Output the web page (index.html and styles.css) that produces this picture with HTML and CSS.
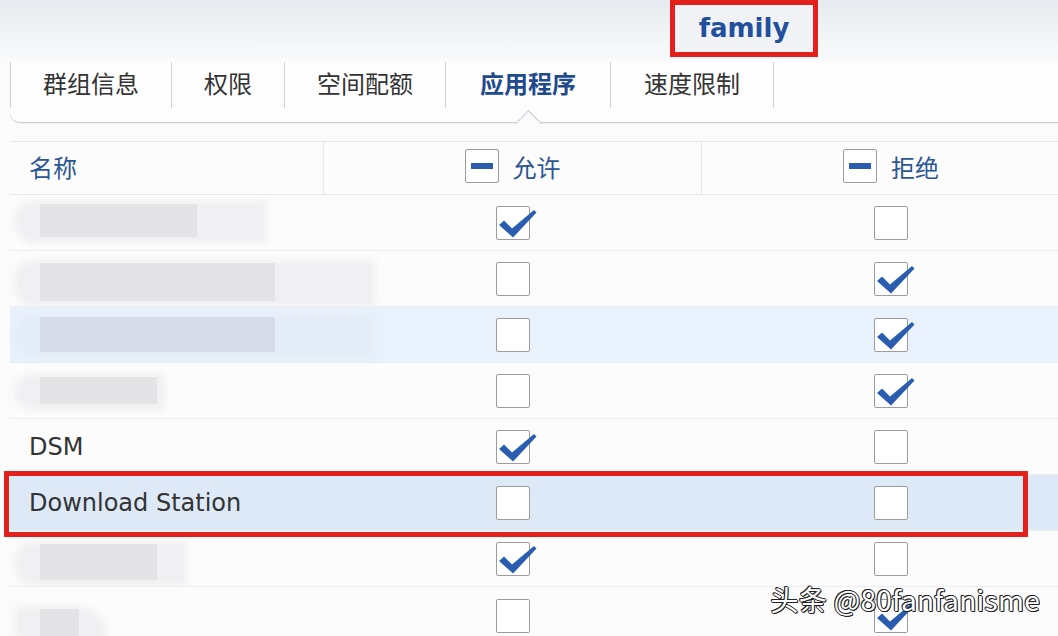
FILE: index.html
```html
<!DOCTYPE html>
<html lang="zh-CN">
<head>
  <meta charset="UTF-8" />
  <title>family - 应用程序权限</title>
  <link rel="stylesheet" href="styles.css">
</head>
<body>
  <div class="page">
    <div class="title-bar">
      <div class="title-box">family</div>
    </div>

    <div class="tabs">
      <div class="tab">群组信息</div>
      <div class="tab">权限</div>
      <div class="tab">空间配额</div>
      <div class="tab active">应用程序</div>
      <div class="tab">速度限制</div>
    </div>

    <div class="grid">
      <div class="row head">
        <div class="cell name">名称</div>
        <div class="cell col"><span class="box mixed"><i></i></span>允许</div>
        <div class="cell col"><span class="box mixed"><i></i></span>拒绝</div>
      </div>

      <div class="row">
        <div class="cell name"><span class="redact r1"></span></div>
        <div class="cell col"><span class="box checked"></span></div>
        <div class="cell col"><span class="box"></span></div>
      </div>
      <div class="row">
        <div class="cell name"><span class="redact r2"></span></div>
        <div class="cell col"><span class="box"></span></div>
        <div class="cell col"><span class="box checked"></span></div>
      </div>
      <div class="row hover">
        <div class="cell name"><span class="redact r3"></span></div>
        <div class="cell col"><span class="box"></span></div>
        <div class="cell col"><span class="box checked"></span></div>
      </div>
      <div class="row">
        <div class="cell name"><span class="redact r4"></span></div>
        <div class="cell col"><span class="box"></span></div>
        <div class="cell col"><span class="box checked"></span></div>
      </div>
      <div class="row">
        <div class="cell name">DSM</div>
        <div class="cell col"><span class="box checked"></span></div>
        <div class="cell col"><span class="box"></span></div>
      </div>
      <div class="row selected marked">
        <div class="cell name">Download Station</div>
        <div class="cell col"><span class="box"></span></div>
        <div class="cell col"><span class="box"></span></div>
      </div>
      <div class="row">
        <div class="cell name"><span class="redact r7"></span></div>
        <div class="cell col"><span class="box checked"></span></div>
        <div class="cell col"><span class="box"></span></div>
      </div>
      <div class="row">
        <div class="cell name"><span class="redact r8"></span></div>
        <div class="cell col"><span class="box"></span></div>
        <div class="cell col"><span class="box checked"></span></div>
      </div>
    </div>

    <div class="watermark">头条 @80fanfanisme</div>
  </div>

  <script>
    // casilla marcada: dibujar el check azul
    const tick = '<svg class="tick" viewBox="0 0 34 34" width="34" height="34">' +
      '<path d="M3 19 L8 14.5 L16 22.5 L38 4 L40.5 6.5 L17 31.5 Z" fill="#2a5cb0"/></svg>';
    document.querySelectorAll(".box.checked").forEach((el) => {
      el.innerHTML = tick;
    });
  </script>
</body>
</html>
```

FILE: styles.css
```css
:root {
  --blue: #2a5cb0;
  --blue-text: #2b5694;
  --line: #e5e7eb;
  --red: #e3201b;
  --text: #333333;
}
body {
  margin: 0;
  background: #fbfbfc;
  font-family: "DejaVu Sans", "Noto Sans CJK SC", sans-serif;
  color: var(--text);
  overflow: hidden;
}
.page {
  position: relative;
  width: 1058px;
  height: 636px;
  overflow: hidden;
  background: linear-gradient(#e7eaef 0, #f9fafb 60px, #fbfbfc 62px);
}
.title-bar {
  height: 62px;
  padding-left: 670px;
}
.title-box {
  width: 148px;
  height: 57px;
  box-sizing: border-box;
  border: 5px solid var(--red);
  background: #f0f2f5;
  text-align: center;
  line-height: 47px;
  font-size: 26px;
  font-weight: bold;
  color: #22509e;
}
.tabs {
  position: relative;
  display: flex;
  margin-left: 10px;
  padding-bottom: 14px;
  border-bottom: 1px solid #c8ccd2;
  border-bottom-left-radius: 10px;
  background: #fdfdfe;
  box-shadow: 0 1px 1px rgba(0, 0, 0, 0.04);
}
.tab {
  position: relative;
  height: 46px;
  line-height: 46px;
  padding: 0 32px;
  font-size: 24px;
  border-left: 1px solid #cfd2d6;
}
.tab:last-child {
  padding: 0 33px;
  border-right: 1px solid #cfd2d6;
}
.tab.active {
  padding: 0 34px;
  color: #1f4a8c;
  font-weight: bold;
}
.tab.active::after {
  content: "";
  position: absolute;
  left: 50%;
  top: 52px;
  width: 18px;
  height: 18px;
  margin-left: -9px;
  background: #fbfbfc;
  border-top: 1px solid #c8ccd2;
  border-left: 1px solid #c8ccd2;
  transform: rotate(45deg);
}
.grid {
  margin: 18px 0 0 10px;
  width: 1070px;
  border-top: 1px solid var(--line);
}
.row {
  position: relative;
  display: grid;
  grid-template-columns: 314px 378px 378px;
  height: 55px;
  border-bottom: 1px solid #eceef1;
  background: #fcfcfd;
}
.row.head {
  height: 52px;
  border-bottom-color: var(--line);
}
.row.head .cell {
  padding-bottom: 4px;
  box-sizing: border-box;
  color: var(--blue-text);
}
.row.head .cell:not(:last-child) {
  border-right: 1px solid var(--line);
}
.row.hover {
  background: #e9f1fc;
}
.row.selected {
  background: #dde9f7;
}
.row.marked {
  z-index: 2;
}
.row.marked::after {
  content: "";
  position: absolute;
  left: -6px;
  top: -4px;
  width: 1024px;
  height: 66px;
  box-sizing: border-box;
  border: 5px solid var(--red);
}
.cell {
  display: flex;
  align-items: center;
  font-size: 24px;
}
.cell.name {
  position: relative;
  z-index: 0;
  padding-left: 19px;
}
.cell.col {
  justify-content: center;
  gap: 14px;
}
.box {
  position: relative;
  width: 34px;
  height: 34px;
  box-sizing: border-box;
  border: 1px solid #9c9c9c;
  border-radius: 2px;
  background: #ffffff;
}
.box.mixed i {
  position: absolute;
  left: 5px;
  top: 13px;
  width: 22px;
  height: 6px;
  background: var(--blue);
}
.tick {
  position: absolute;
  left: -1px;
  top: -1px;
  overflow: visible;
}

/* nombres ocultos (borrosos) */
.redact {
  position: relative;
  display: block;
  margin-left: 11px;
  background: #e4e4e7;
}
.redact::before {
  content: "";
  position: absolute;
  left: -26px;
  top: -3px;
  right: -70px;
  bottom: -6px;
  border-radius: 20px 0 0 20px;
  background: #f0f0f2;
  filter: blur(3px);
  z-index: -1;
}
.r1 { width: 157px; height: 33px; margin-top: -4px; }
.r2 { width: 235px; height: 38px; margin-top: 6px; }
.r2::before { right: -100px; }
.r3 { width: 235px; height: 35px; background: #d6dde8; }
.r3::before { background: #e4ecf7; right: -100px; }
.r4 { width: 117px; height: 27px; }
.r4::before { right: -8px; }
.r7 { width: 117px; height: 36px; margin-top: 6px; }
.r7::before { right: -30px; }
.r8 { width: 39px; height: 36px; margin-top: 22px; }
.r8::before { right: -28px; border-radius: 4px 30px 0 20px; }

.watermark {
  position: absolute;
  right: 18px;
  bottom: 17px;
  font-family: "Noto Sans CJK SC", sans-serif;
  font-size: 28px;
  color: #ffffff;
  letter-spacing: 0.3px;
  text-shadow: 1px 0 0 #222, -1px 0 0 #222, 0 1px 0 #222, 0 -1px 0 #222,
    1px 1px 0 #222, -1px -1px 0 #222;
}
```
